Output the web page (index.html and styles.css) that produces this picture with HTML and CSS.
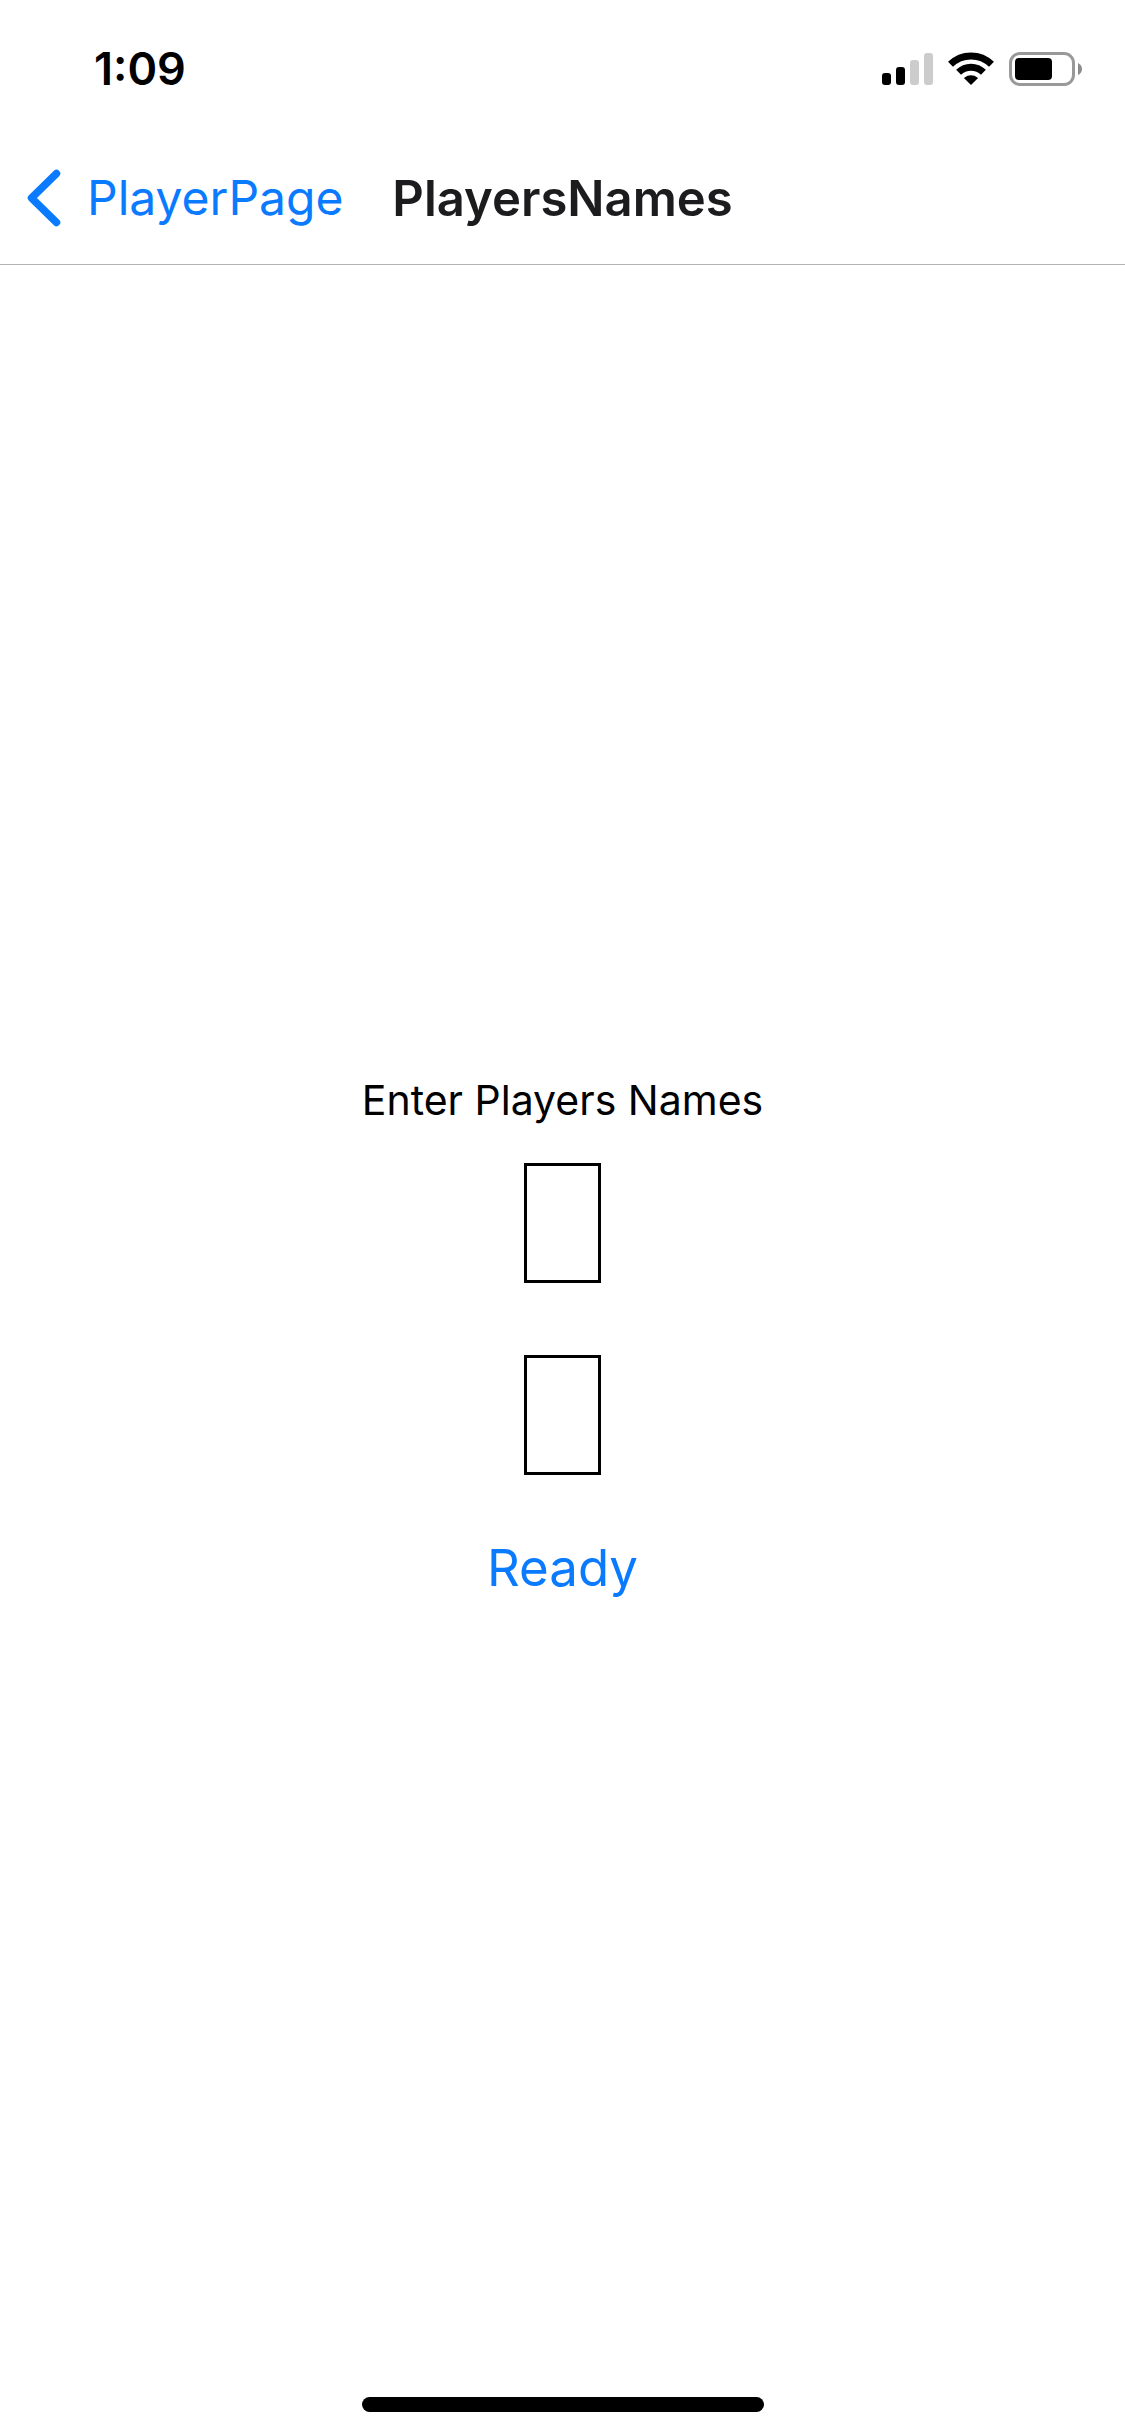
FILE: index.html
```html
<!DOCTYPE html>
<html lang="en">
<head>
  <meta charset="utf-8">
  <meta name="viewport" content="width=device-width, initial-scale=1">
  <title>PlayersNames</title>
  <link rel="stylesheet" href="styles.css">
</head>
<body>
  <div class="screen">
    <div class="status-bar">
      <time class="clock">1:09</time>
      <div class="indicators">
        <svg class="indicator" width="51" height="32" viewBox="0 0 51 32" role="img" aria-label="Signal">
          <rect x="0" y="20" width="9" height="12" rx="3"/>
          <rect x="14" y="14" width="9" height="18" rx="3"/>
          <rect x="28" y="7" width="9" height="25" rx="3" fill="#cccccc"/>
          <rect x="42" y="0" width="9" height="32" rx="3" fill="#cccccc"/>
        </svg>
        <svg class="indicator" width="46" height="34" viewBox="0 0 46 34" role="img" aria-label="Wi-Fi">
          <path d="M2.5 12.3A29.2 29.2 0 0 1 43.5 12.3M10.6 20.2A17.8 17.8 0 0 1 35.4 20.2" fill="none" stroke="#000" stroke-width="7"/>
          <path d="M23 33L16.4 26.6Q16 26 16.6 25.5A10 10 0 0 1 29.4 25.5Q30 26 29.6 26.6Z"/>
        </svg>
        <svg class="indicator" width="73" height="34" viewBox="0 0 73 34" role="img" aria-label="Battery">
          <rect x="1.5" y="1.5" width="63" height="31" rx="9.5" fill="none" stroke="#999999" stroke-width="3"/>
          <rect x="6" y="6" width="37" height="22" rx="4"/>
          <path d="M69 11Q73 13 73 17T69 23Z" fill="#8c8c8c"/>
        </svg>
      </div>
    </div>

    <header class="nav-bar">
      <a class="back-link" href="#">
        <svg class="back-icon" width="34" height="58" viewBox="0 0 34 58" aria-hidden="true">
          <path d="M29.5 4.5L4.5 29L29.5 53.5" fill="none" stroke="currentColor" stroke-width="7.5" stroke-linecap="round" stroke-linejoin="round"/>
        </svg>
        <span>PlayerPage</span>
      </a>
      <h1 class="title">PlayersNames</h1>
    </header>

    <main class="content">
      <form class="names-form">
        <h2 class="prompt" id="prompt">Enter Players Names</h2>
        <input class="name-input" type="text" aria-label="First player name" aria-describedby="prompt">
        <input class="name-input" type="text" aria-label="Second player name" aria-describedby="prompt">
        <button class="ready-button" type="button">Ready</button>
      </form>
    </main>

    <div class="home-indicator"></div>
  </div>
</body>
</html>
```

FILE: styles.css
```css
* {
  box-sizing: border-box;
}

body {
  margin: 0;
  background: #ffffff;
  color: #000000;
  font-family: Inter, "Liberation Sans", sans-serif;
}

.screen {
  position: relative;
  display: flex;
  flex-direction: column;
  min-height: 100vh;
}

.status-bar {
  display: flex;
  align-items: center;
  justify-content: space-between;
  height: 132px;
  padding: 6px 43px 0 94px;
}

.clock {
  font-size: 45px;
  font-weight: 600;
  line-height: 52px;
}

.indicators {
  display: flex;
  align-items: center;
  gap: 15px;
}

.indicator {
  display: block;
}

.nav-bar {
  display: grid;
  grid-template-columns: 1fr auto 1fr;
  align-items: center;
  height: 133px;
  border-bottom: 1px solid #b2b2b2;
}

.back-link {
  display: flex;
  align-items: center;
  gap: 26px;
  padding-left: 27px;
  color: #0a7aff;
  font-size: 48px;
  line-height: 60px;
  text-decoration: none;
}

.title {
  margin: 0;
  color: #1c1c1e;
  font-size: 49px;
  font-weight: 600;
  line-height: 61px;
}

.content {
  display: flex;
  flex: 1;
  align-items: center;
  justify-content: center;
}

.names-form {
  display: flex;
  flex-direction: column;
  align-items: center;
}

.prompt {
  margin: 0 0 2px;
  font-size: 41px;
  font-weight: 400;
  line-height: 49px;
}

.name-input {
  width: 77px;
  height: 120px;
  margin: 36px 0;
  padding: 0 30px;
  border: 3px solid #000000;
  border-radius: 0;
  background: #ffffff;
  font: inherit;
  font-size: 41px;
  outline: none;
}

.ready-button {
  padding: 24px;
  border: 0;
  background: none;
  color: #0a7aff;
  font-family: inherit;
  font-size: 51px;
  line-height: 66px;
}

.home-indicator {
  position: absolute;
  bottom: 24px;
  left: 50%;
  width: 402px;
  height: 15px;
  margin-left: -201px;
  border-radius: 8px;
  background: #000000;
}
```
